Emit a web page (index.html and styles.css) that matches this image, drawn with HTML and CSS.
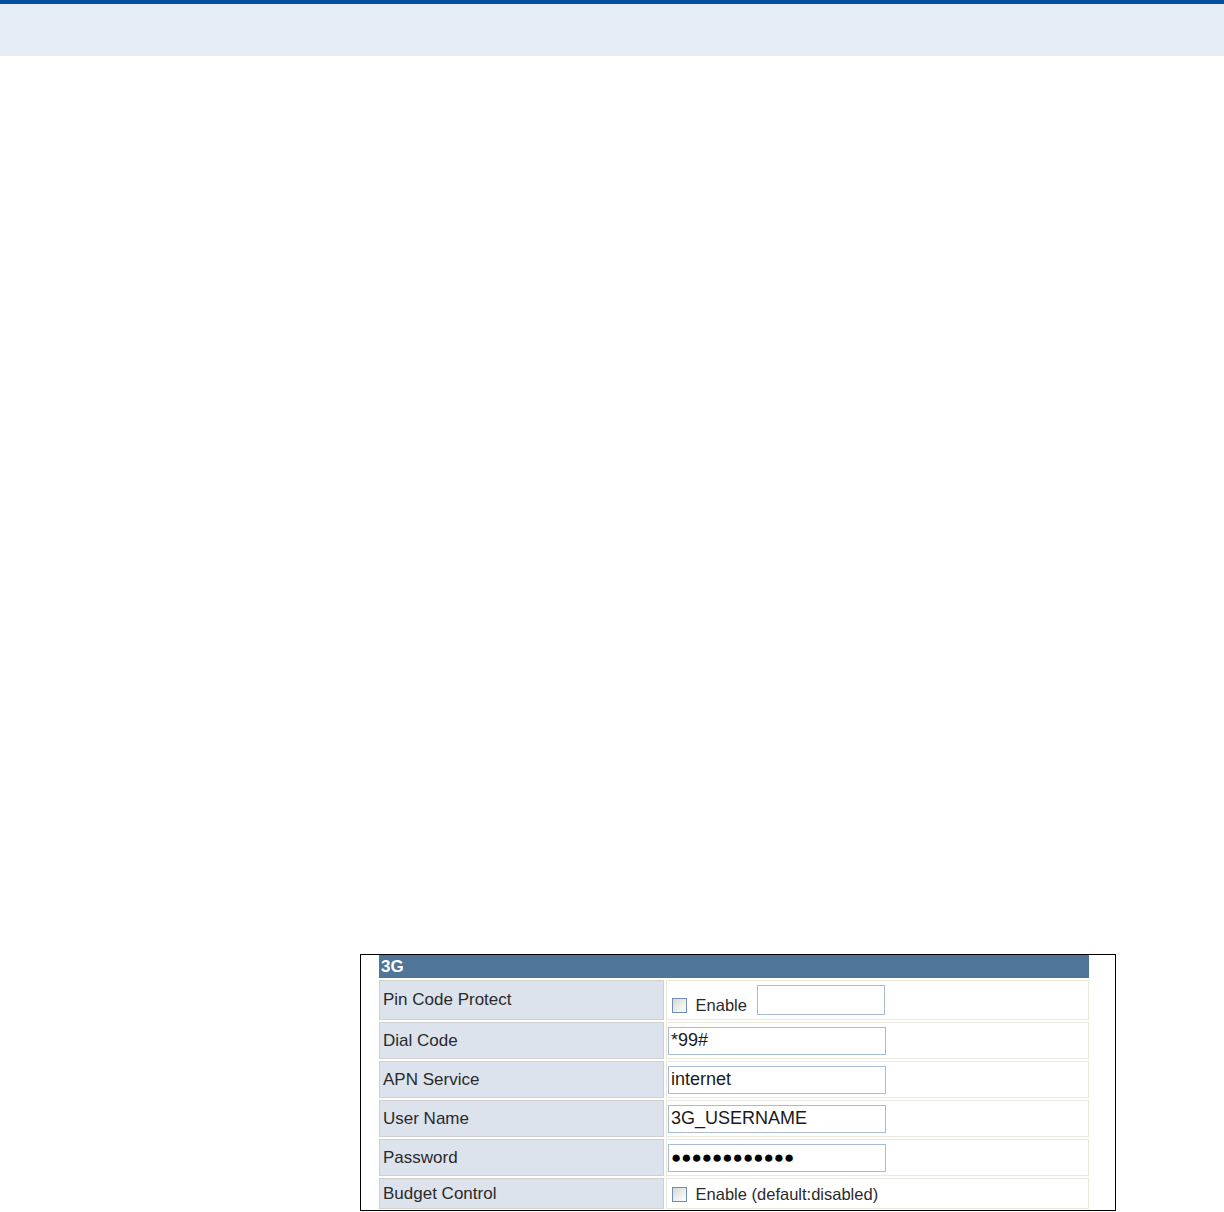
FILE: index.html
```html
<!DOCTYPE html>
<html lang="en">
<head>
  <meta charset="UTF-8" />
  <title>3G Settings</title>
  <link rel="stylesheet" href="styles.css">
</head>
<body>

<header class="page-head"></header>

<div class="page">
  <!-- screenshot of the 3G settings panel -->
  <div class="shot">
    <table class="settings">
      <tr>
        <th colspan="2">3G</th>
      </tr>
      <tr class="r-pin">
        <td class="label">Pin Code Protect</td>
        <td class="value">
          <label class="check"><input type="checkbox"> Enable</label>
          <input type="text" class="field short">
        </td>
      </tr>
      <tr>
        <td class="label">Dial Code</td>
        <td class="value"><input type="text" class="field" value="*99#"></td>
      </tr>
      <tr>
        <td class="label">APN Service</td>
        <td class="value"><input type="text" class="field" value="internet"></td>
      </tr>
      <tr>
        <td class="label">User Name</td>
        <td class="value"><input type="text" class="field" value="3G_USERNAME"></td>
      </tr>
      <tr>
        <td class="label">Password</td>
        <td class="value"><input type="text" class="field pw" value="●●●●●●●●●●●●" readonly></td>
      </tr>
      <tr class="r-budget">
        <td class="label">Budget Control</td>
        <td class="value">
          <label class="check"><input type="checkbox"> Enable (default:disabled)</label>
        </td>
      </tr>
    </table>
  </div>
</div>

</body>
</html>
```

FILE: styles.css
```css
body {
  margin: 0;
  font-family: 'Liberation Sans', Arial, sans-serif;
  background: #fff;
  color: #222;
}

.page-head {
  height: 52px;
  background: #e5ecf5;
  border-top: 4px solid #00509d;
}

.page {
  padding: 898px 0 0 360px;
}

.shot {
  width: 754px;
  height: 255px;
  border: 1px solid #000;
  overflow: hidden;
}

.settings {
  margin: -2px 0 0 16px;
  border-spacing: 2px;
  width: 714px;
  font-size: 17px;
}

.settings th {
  background: #4f7599;
  color: #fff;
  text-align: left;
  font-size: 17px;
  font-weight: bold;
  height: 23px;
  padding: 0 2px;
}

.settings td {
  padding: 0;
}

.label {
  width: 280px;
  background: #dce3ed;
  border: 1px solid #cfd0cc;
  padding-left: 3px !important;
  color: #2a2a2a;
  height: 35px;
}

.value {
  background: #fff;
  border: 1px solid #ebe9dc;
  padding-left: 1px !important;
  height: 35px;
}

.r-pin .label,
.r-pin .value {
  height: 38px;
}

.r-budget .label,
.r-budget .value {
  height: 29px;
}

.field {
  box-sizing: border-box;
  width: 218px;
  height: 28px;
  border: 1px solid #a7bbd3;
  padding: 0 2px;
  font-family: 'Liberation Sans', Arial, sans-serif;
  font-size: 18px;
  color: #1a1a1a;
  outline: none;
  vertical-align: middle;
}

.field.pw {
  font-size: 17px;
  color: #000;
}

.field.short {
  width: 128px;
  height: 30px;
  margin-left: 5px;
  vertical-align: -2px;
}

.check {
  font-size: 16.5px;
  color: #2a2a2a;
  padding-left: 4px;
  position: relative;
  top: 7px;
}

.r-budget .check {
  top: 1px;
}

.check input {
  -webkit-appearance: none;
  appearance: none;
  width: 15px;
  height: 15px;
  margin: 0 4px 0 0;
  border: 1px solid #6f8db2;
  background: linear-gradient(135deg, #d8d8d2, #ffffff);
  vertical-align: -2px;
}
```
